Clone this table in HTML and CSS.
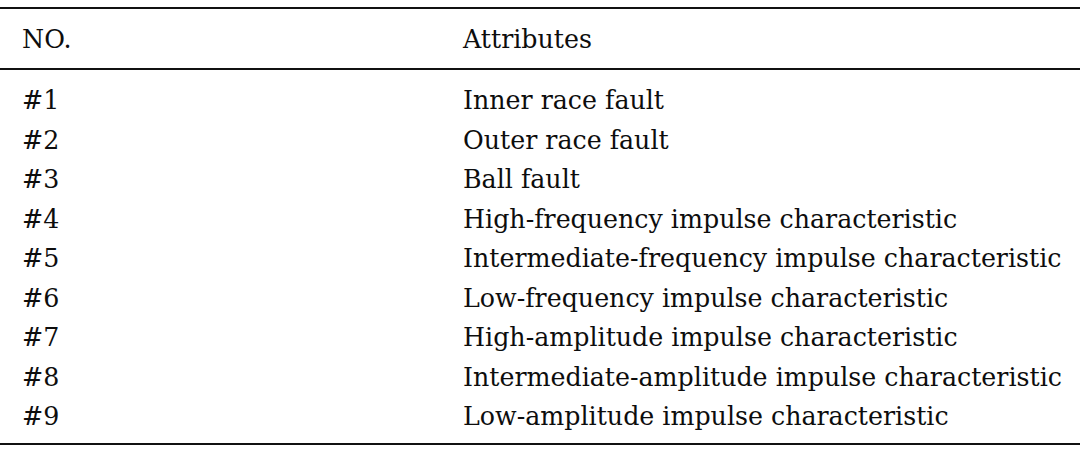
FILE: index.html
```html
<!DOCTYPE html>
<html>
<head>
<meta charset="utf-8">
<link rel="stylesheet" href="styles.css">
</head>
<body>
<table class="tbl">
  <colgroup><col class="col1"><col class="col2"></colgroup>
  <thead>
    <tr><th class="c1">NO.</th><th class="c2">Attributes</th></tr>
  </thead>
  <tbody>
    <tr class="first"><td class="c1">#1</td><td class="c2">Inner race fault</td></tr>
    <tr><td class="c1">#2</td><td class="c2">Outer race fault</td></tr>
    <tr><td class="c1">#3</td><td class="c2">Ball fault</td></tr>
    <tr><td class="c1">#4</td><td class="c2">High-frequency impulse characteristic</td></tr>
    <tr><td class="c1">#5</td><td class="c2">Intermediate-frequency impulse characteristic</td></tr>
    <tr><td class="c1">#6</td><td class="c2">Low-frequency impulse characteristic</td></tr>
    <tr><td class="c1">#7</td><td class="c2">High-amplitude impulse characteristic</td></tr>
    <tr><td class="c1">#8</td><td class="c2">Intermediate-amplitude impulse characteristic</td></tr>
    <tr class="last"><td class="c1">#9</td><td class="c2">Low-amplitude impulse characteristic</td></tr>
  </tbody>
</table>
</body>
</html>
```
FILE: styles.css
```css
html, body {
  margin: 0;
  padding: 0;
  background: #ffffff;
}
body {
  padding-top: 7px;
}
.tbl {
  width: 1080px;
  table-layout: fixed;
  border-collapse: collapse;
  font-family: "DejaVu Serif", serif;
  font-size: 25.3px;
  color: #0d0d0d;
  border-top: 2px solid #111111;
  border-bottom: 2px solid #111111;
}
.col1 {
  width: 463px;
}
.tbl th {
  font-weight: normal;
  text-align: left;
  height: 57px;
  padding: 2px 0 0 0;
  line-height: 39px;
  border-bottom: 2px solid #111111;
}
.tbl td {
  padding: 0;
  height: 39.5px;
  line-height: 39.5px;
  white-space: nowrap;
}
.tbl .c1 {
  padding-left: 22px;
}
.tbl tr.first td {
  padding-top: 11px;
}
.tbl tr.last td {
  padding-bottom: 6px;
}
```
